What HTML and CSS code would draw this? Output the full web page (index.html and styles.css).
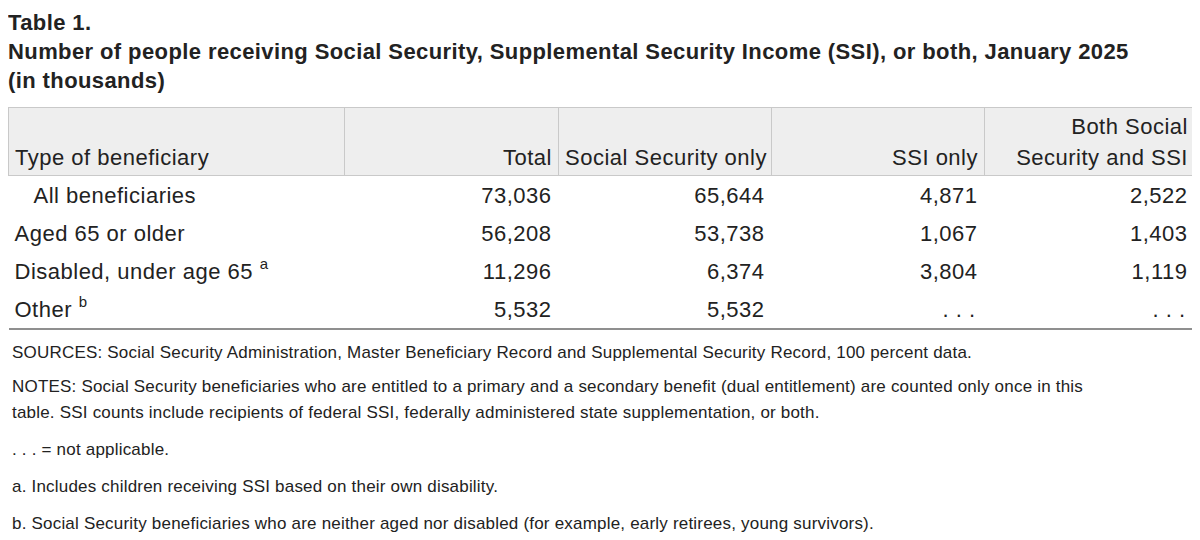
FILE: index.html
```html
<!DOCTYPE html>
<html lang="en">
<head>
<meta charset="utf-8">
<title>Table 1</title>
<link rel="stylesheet" href="styles.css">
</head>
<body>
<div class="caption">
  <div class="label">Table 1.</div>
  <div class="title">Number of people receiving Social Security, Supplemental Security Income (SSI), or both, January 2025</div>
  <div class="title">(in thousands)</div>
</div>
<table class="data">
  <colgroup>
    <col class="c1"><col class="c2"><col class="c3"><col class="c4"><col class="c5">
  </colgroup>
  <thead>
    <tr>
      <th class="stub">Type of beneficiary</th>
      <th>Total</th>
      <th>Social Security only</th>
      <th>SSI only</th>
      <th>Both Social<br>Security and SSI</th>
    </tr>
  </thead>
  <tbody>
    <tr>
      <td class="stub indent">All beneficiaries</td>
      <td>73,036</td><td>65,644</td><td>4,871</td><td>2,522</td>
    </tr>
    <tr>
      <td class="stub">Aged 65 or older</td>
      <td>56,208</td><td>53,738</td><td>1,067</td><td>1,403</td>
    </tr>
    <tr>
      <td class="stub">Disabled, under age 65 <sup>a</sup></td>
      <td>11,296</td><td>6,374</td><td>3,804</td><td>1,119</td>
    </tr>
    <tr>
      <td class="stub">Other <sup>b</sup></td>
      <td>5,532</td><td>5,532</td><td class="na">. . .</td><td class="na">. . .</td>
    </tr>
  </tbody>
</table>
<div class="notes">
  <p class="first">SOURCES: Social Security Administration, Master Beneficiary Record and Supplemental Security Record, 100 percent data.</p>
  <p>NOTES: Social Security beneficiaries who are entitled to a primary and a secondary benefit (dual entitlement) are counted only once in this table. SSI counts include recipients of federal SSI, federally administered state supplementation, or both.</p>
  <p>. . . = not applicable.</p>
  <p>a. Includes children receiving SSI based on their own disability.</p>
  <p>b. Social Security beneficiaries who are neither aged nor disabled (for example, early retirees, young survivors).</p>
</div>
</body>
</html>
```
FILE: styles.css
```css
html, body {
  background: #ffffff;
}
body {
  margin: 8px;
  font-family: "Liberation Sans", Arial, sans-serif;
  color: #222222;
}
.caption {
  font-weight: bold;
  font-size: 22px;
  letter-spacing: 0.4px;
  line-height: 29px;
  color: #222222;
}
.data {
  margin-top: 12px;
  width: 1186px;
  border-collapse: collapse;
  table-layout: fixed;
  font-size: 22px;
  letter-spacing: 0.5px;
  line-height: 31px;
  color: #222222;
}
.c1 { width: 336px; }
.c2 { width: 214px; }
.c3 { width: 213px; }
.c4 { width: 213px; }
.c5 { width: 210px; }
.data th {
  background: #eeeeee;
  border: 1px solid #c9c9c9;
  font-weight: normal;
  text-align: right;
  vertical-align: bottom;
  padding: 3px 6px 2px 6px;
  white-space: nowrap;
}
.data td {
  text-align: right;
  padding: 4px 7px 3px 6px;
  white-space: nowrap;
}
.data .stub {
  text-align: left;
  padding-left: 6px;
}
.data .indent {
  padding-left: 25px;
}
.data tbody tr:last-child td {
  border-bottom: 2px solid #8f8f8f;
}
.data sup {
  font-size: 15px;
  line-height: 0;
  vertical-align: 10px;
}
.data .na {
  padding-right: 9px;
}
.notes {
  padding: 10px 4px 0 4px;
  max-width: 1100px;
  font-size: 17px;
  letter-spacing: 0.2px;
  line-height: 26px;
  color: #222222;
}
.notes p {
  margin: 0 0 11px 0;
}
.notes p.first {
  margin-bottom: 8px;
}
```
